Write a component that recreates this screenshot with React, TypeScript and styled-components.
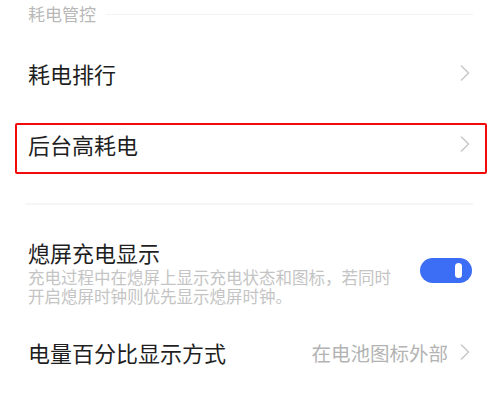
import React from 'react'
import styled, { createGlobalStyle } from 'styled-components'

const GlobalStyle = createGlobalStyle`
  html, body {
    margin: 0;
    padding: 0;
    background: #ffffff;
  }
  body {
    font-family: "Noto Sans CJK SC", "Noto Sans", sans-serif;
  }
`

const Page = styled.div`
  width: 500px;
  height: 404px;
  background: #fff;
  overflow: hidden;
`

const SectionHeader = styled.div`
  display: flex;
  align-items: flex-start;
  height: 36px;
  padding: 4px 27px 0 28px;
  box-sizing: border-box;
  font-size: 17px;
  line-height: 20px;
  color: #b8b8b8;

  &::after {
    content: '';
    flex: 1;
    height: 1px;
    margin: 10px 0 0 10px;
    background: #f3f3f3;
  }
`

const Row = styled.div<{ $top?: number }>`
  display: flex;
  align-items: center;
  height: 74px;
  padding: 0 30px 0 28px;
  margin-top: ${({ $top }) => $top || 0}px;
  box-sizing: border-box;
`

const HighlightRow = styled.div`
  display: flex;
  align-items: center;
  height: 74px;
  padding: 0 13px 0 15px;
  box-sizing: border-box;
`

const Highlight = styled.div`
  flex: 1;
  display: flex;
  align-items: center;
  height: 51px;
  margin-top: 2px;
  padding: 0 15px 9px 11px;
  border: 2px solid #f20a0a;
  border-radius: 2px;
  box-sizing: border-box;
`

const Title = styled.div`
  flex: 1;
  font-size: 22px;
  line-height: 28px;
  color: #1f1f1f;
`

const Value = styled.span`
  font-size: 19.5px;
  color: #b3b3b3;
  margin-right: 12px;
`

const Divider = styled.div`
  height: 2px;
  margin: 19px 27px 0 25px;
  background: #f6f6f6;
`

const SwitchRow = styled.div`
  display: flex;
  align-items: center;
  gap: 20px;
  margin-top: 33px;
  padding: 0 28px;
`

const SwitchText = styled.div`
  flex: 1;
  display: flex;
  flex-direction: column;
`

const Desc = styled.div`
  margin-top: 2px;
  font-size: 16.5px;
  line-height: 19px;
  color: #c4c4c4;
`

const Toggle = styled.div<{ $on?: boolean }>`
  display: flex;
  align-items: center;
  justify-content: ${({ $on }) => ($on ? 'flex-end' : 'flex-start')};
  width: 52px;
  height: 25px;
  margin-top: -3px;
  padding: 0 10px;
  box-sizing: border-box;
  border-radius: 13px;
  background: ${({ $on }) => ($on ? '#3b6ef4' : '#dddddd')};
`

const Knob = styled.div`
  width: 7px;
  height: 15px;
  border-radius: 4px;
  background: #fff;
`

const Chevron = () => (
  <svg width="10" height="16" viewBox="0 0 10 16" fill="none">
    <polyline points="1.5,1 8.5,8 1.5,15" stroke="#c8c8c8" strokeWidth="1.5" strokeLinecap="round" strokeLinejoin="round" />
  </svg>
)

export default function App() {
  return (
    <Page>
      <GlobalStyle />
      <SectionHeader>耗电管控</SectionHeader>
      <Row>
        <Title>耗电排行</Title>
        <Chevron />
      </Row>
      <HighlightRow>
        <Highlight>
          <Title>后台高耗电</Title>
          <Chevron />
        </Highlight>
      </HighlightRow>
      <Divider />
      <SwitchRow>
        <SwitchText>
          <Title>熄屏充电显示</Title>
          <Desc>充电过程中在熄屏上显示充电状态和图标，若同时开启熄屏时钟则优先显示熄屏时钟。</Desc>
        </SwitchText>
        <Toggle $on>
          <Knob />
        </Toggle>
      </SwitchRow>
      <Row $top={9}>
        <Title>电量百分比显示方式</Title>
        <Value>在电池图标外部</Value>
        <Chevron />
      </Row>
    </Page>
  )
}
